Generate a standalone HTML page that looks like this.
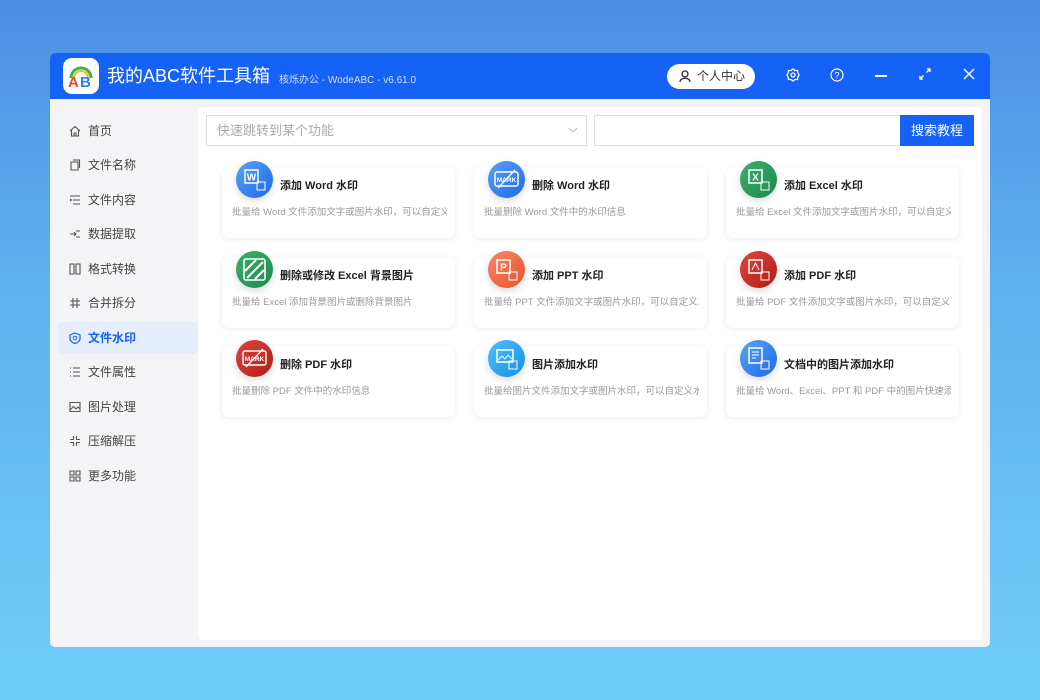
<!DOCTYPE html>
<html><head><meta charset="utf-8"><style>
*{margin:0;padding:0;box-sizing:border-box}
body{width:1040px;height:700px;overflow:hidden;background:linear-gradient(180deg,#4b8fe2 0%,#5fb0ef 40%,#70cdfa 100%);font-family:"Liberation Sans","Noto Sans CJK SC",sans-serif;position:relative}
.win{position:absolute;left:50px;top:53px;width:940px;height:594px;background:#f4f4f6;border-radius:5px;overflow:hidden}
.tb{position:absolute;left:0;top:0;width:940px;height:46px;background:#1661f6}
.logo{position:absolute;left:13px;top:5px;width:36px;height:36px;background:#fff;border-radius:9px}
.title{position:absolute;left:57px;top:10px;color:#fff;font-size:18px;line-height:26px}
.sub{position:absolute;left:229px;top:18px;color:#cfe0ff;font-size:10px}
.user{position:absolute;left:617px;top:11px;width:88px;height:25px;background:#fff;border-radius:13px;font-size:12px;color:#333;line-height:25px;padding-left:30px}
.ic{position:absolute;top:15px}
.side{position:absolute;left:0;top:46px;width:148px}
.si{position:absolute;left:8px;width:140px;height:32px;font-size:12px;color:#444;line-height:32px;padding-left:30px}
.si svg{position:absolute;left:11px;top:10px}
.si.act{background:#e6eefc;color:#1661f6;font-weight:bold;border-radius:4px}
.panel{position:absolute;left:148px;top:54px;width:784px;height:533px;background:#fff;border-radius:4px}
.inp{position:absolute;top:8px;height:31px;border:1px solid #dcdfe6;background:#fff;font-size:13px;color:#aaa;line-height:29px;padding-left:10px}
.btn{position:absolute;left:702px;top:8px;width:74px;height:31px;background:#1661f6;color:#fff;font-size:13px;line-height:31px;text-align:center}
.card{position:absolute;width:233px;height:71px;background:#fff;border-radius:7px;box-shadow:0 1px 6px rgba(0,0,0,.08)}
.card .c{position:absolute;left:14px;top:-6px;width:37px;height:37px;border-radius:50%;box-shadow:0 3px 8px rgba(0,0,0,.15)}
.card .c svg{position:absolute;left:0;top:0}
.card b{position:absolute;left:58px;top:10px;font-size:11px;color:#222}
.card p{position:absolute;left:10px;top:37px;width:215px;white-space:nowrap;overflow:hidden;font-size:9.5px;color:#999}
</style></head><body>
<div class="win">
<div class="tb">
<div class="logo"><svg width="36" height="36" viewBox="0 0 36 36"><path d="M8 20 A10 10 0 0 1 28 20" stroke="#3bb44a" stroke-width="3" fill="none"/><path d="M11 20 A7 7 0 0 1 25 20" stroke="#f5b915" stroke-width="2" fill="none"/><text x="5" y="29" font-size="15" font-weight="bold" fill="#e8443a" font-family="Liberation Sans">A</text><text x="17" y="29" font-size="15" font-weight="bold" fill="#2f7df0" font-family="Liberation Sans">B</text></svg></div>
<div class="title">我的ABC软件工具箱</div>
<div class="sub">核烁办公 - WodeABC - v6.61.0</div>
<div class="user"><svg style="position:absolute;left:12px;top:6px" width="12" height="13" viewBox="0 0 12 13"><circle cx="6" cy="4" r="3" fill="none" stroke="#333" stroke-width="1.3"/><path d="M1 12 C1 7 11 7 11 12" fill="none" stroke="#333" stroke-width="1.3"/></svg>个人中心</div>
<svg class="ic" style="left:736px" width="14" height="14" viewBox="0 0 14 14"><circle cx="7" cy="7" r="2" fill="none" stroke="#fff" stroke-width="1.3"/><path d="M7 1 L9 2.5 L11.5 2.5 L12 5 L13 7 L12 9 L11.5 11.5 L9 11.5 L7 13 L5 11.5 L2.5 11.5 L2 9 L1 7 L2 5 L2.5 2.5 L5 2.5Z" fill="none" stroke="#fff" stroke-width="1.3"/></svg>
<svg class="ic" style="left:780px" width="14" height="14" viewBox="0 0 14 14"><circle cx="7" cy="7" r="6" fill="none" stroke="#fff" stroke-width="1.2"/><text x="7" y="10.5" font-size="9" fill="#fff" text-anchor="middle" font-family="Liberation Sans">?</text></svg>
<div style="position:absolute;left:825px;top:22px;width:12px;height:1.5px;background:#fff"></div>
<svg class="ic" style="left:869px" width="12" height="12" viewBox="0 0 12 12"><path d="M1 11 L4.5 7.5 M7.5 4.5 L11 1 M1 8 L1 11 L4 11 M8 1 L11 1 L11 4" stroke="#fff" stroke-width="1.3" fill="none"/></svg>
<svg class="ic" style="left:913px" width="12" height="12" viewBox="0 0 12 12"><path d="M1 1 L11 11 M11 1 L1 11" stroke="#fff" stroke-width="1.4"/></svg>
</div>
<div class="side">
<div class="si" style="top:16px"><svg width="12" height="12" viewBox="0 0 12 12"><path d="M1 6 L6 1.5 L11 6 M2.5 5 V11 H9.5 V5 M5 11 V8 H7 V11" fill="none" stroke="#555" stroke-width="1.1"/></svg>首页</div>
<div class="si" style="top:50px"><svg width="12" height="12" viewBox="0 0 12 12"><path d="M2 3 V11 H9 V3 Z M4 1 H10.5 V9" fill="none" stroke="#555" stroke-width="1.1"/></svg>文件名称</div>
<div class="si" style="top:85px"><svg width="12" height="12" viewBox="0 0 12 12"><path d="M1 2 H11 M4 6 H11 M4 10 H11 M1 5 L2.5 6 L1 7" fill="none" stroke="#555" stroke-width="1.1"/></svg>文件内容</div>
<div class="si" style="top:119px"><svg width="12" height="12" viewBox="0 0 12 12"><path d="M1 6 H7 M5 4 L7 6 L5 8 M7 3 H11 M7 9 H11" fill="none" stroke="#555" stroke-width="1.1"/></svg>数据提取</div>
<div class="si" style="top:154px"><svg width="12" height="12" viewBox="0 0 12 12"><path d="M1 1 H5 V11 H1Z M7 1 H11 V11 H7Z" fill="none" stroke="#555" stroke-width="1.1"/></svg>格式转换</div>
<div class="si" style="top:188px"><svg width="12" height="12" viewBox="0 0 12 12"><path d="M4 1 V11 M8 1 V11 M1 4 H11 M1 8 H11" fill="none" stroke="#555" stroke-width="1.1"/></svg>合并拆分</div>
<div class="si act" style="top:223px"><svg width="12" height="12" viewBox="0 0 12 12"><path d="M6 1 L11 3 V7 C11 9 8 11 6 11.5 C4 11 1 9 1 7 V3Z" fill="none" stroke="#1661f6" stroke-width="1.2"/><circle cx="6" cy="6" r="1.8" fill="none" stroke="#1661f6"/></svg>文件水印</div>
<div class="si" style="top:257px"><svg width="12" height="12" viewBox="0 0 12 12"><path d="M1 2 H2 M4 2 H11 M1 6 H2 M4 6 H11 M1 10 H2 M4 10 H11" fill="none" stroke="#555" stroke-width="1.1"/></svg>文件属性</div>
<div class="si" style="top:292px"><svg width="12" height="12" viewBox="0 0 12 12"><path d="M1 1.5 H11 V10.5 H1Z M1 9 L4.5 5.5 L7 8 L9 6 L11 8" fill="none" stroke="#555" stroke-width="1.1"/></svg>图片处理</div>
<div class="si" style="top:326px"><svg width="12" height="12" viewBox="0 0 12 12"><path d="M4.5 1 V4.5 H1 M7.5 1 V4.5 H11 M4.5 11 V7.5 H1 M7.5 11 V7.5 H11" fill="none" stroke="#555" stroke-width="1.1"/></svg>压缩解压</div>
<div class="si" style="top:361px"><svg width="12" height="12" viewBox="0 0 12 12"><path d="M1 1 H5 V5 H1Z M7 1 H11 V5 H7Z M1 7 H5 V11 H1Z M7 7 H11 V11 H7Z" fill="none" stroke="#555" stroke-width="1.1"/></svg>更多功能</div>
</div>
<div class="panel">
<div class="inp" style="left:8px;width:381px">快速跳转到某个功能<svg style="position:absolute;right:8px;top:11px" width="10" height="6" viewBox="0 0 10 6"><path d="M1 1 L5 5 L9 1" fill="none" stroke="#bbb"/></svg></div>
<div class="inp" style="left:396px;width:307px"></div>
<div class="btn">搜索教程</div>

<div class="card" style="left:24px;top:60px"><div class="c" style="background:linear-gradient(135deg,#5aa2f5,#1c6ae8)"><svg width="37" height="37"><rect x="9" y="9" width="13" height="13" fill="none" stroke="#fff" stroke-width="1.5"/><text x="15.5" y="19.5" fill="#fff" font-size="10" font-weight="bold" text-anchor="middle" font-family="Liberation Sans">W</text><rect x="21" y="21" width="8" height="8" fill="none" stroke="#fff"/></svg></div><b>添加 Word 水印</b><p>批量给 Word 文件添加文字或图片水印，可以自定义</p></div>
<div class="card" style="left:276px;top:60px"><div class="c" style="background:linear-gradient(135deg,#5aa2f5,#1c6ae8)"><svg width="37" height="37"><rect x="7" y="11" width="23" height="14" rx="2" fill="none" stroke="#fff" stroke-width="1.5"/><text x="18.5" y="21" fill="#fff" font-size="6.5" font-weight="bold" text-anchor="middle" font-family="Liberation Sans">MARK</text><path d="M10 27 L27 9" stroke="#fff" stroke-width="1.3"/></svg></div><b>删除 Word 水印</b><p>批量删除 Word 文件中的水印信息</p></div>
<div class="card" style="left:528px;top:60px"><div class="c" style="background:linear-gradient(135deg,#3cae6e,#1f8a4e)"><svg width="37" height="37"><rect x="9" y="9" width="13" height="13" fill="none" stroke="#fff" stroke-width="1.5"/><text x="15.5" y="19.5" fill="#fff" font-size="10" font-weight="bold" text-anchor="middle" font-family="Liberation Sans">X</text><rect x="21" y="21" width="8" height="8" fill="none" stroke="#fff"/></svg></div><b>添加 Excel 水印</b><p>批量给 Excel 文件添加文字或图片水印，可以自定义</p></div>

<div class="card" style="left:24px;top:150px"><div class="c" style="background:linear-gradient(135deg,#3cae6e,#1f8a4e)"><svg width="37" height="37"><rect x="8" y="8" width="21" height="21" rx="2" fill="none" stroke="#fff" stroke-width="1.6"/><path d="M9 20 L20 9 M11 27 L27 11 M19 28 L28 19" stroke="#fff" stroke-width="2"/></svg></div><b>删除或修改 Excel 背景图片</b><p>批量给 Excel 添加背景图片或删除背景图片</p></div>
<div class="card" style="left:276px;top:150px"><div class="c" style="background:linear-gradient(135deg,#f7886a,#e4542e)"><svg width="37" height="37"><rect x="9" y="9" width="13" height="13" fill="none" stroke="#fff" stroke-width="1.5"/><text x="15.5" y="19.5" fill="#fff" font-size="10" font-weight="bold" text-anchor="middle" font-family="Liberation Sans">P</text><rect x="21" y="21" width="8" height="8" fill="none" stroke="#fff"/></svg></div><b>添加 PPT 水印</b><p>批量给 PPT 文件添加文字或图片水印，可以自定义水</p></div>
<div class="card" style="left:528px;top:150px"><div class="c" style="background:linear-gradient(135deg,#e0453e,#b01c18)"><svg width="37" height="37"><rect x="9" y="9" width="13" height="13" fill="none" stroke="#fff" stroke-width="1.5"/><path d="M12 19 L15.5 12 L19 19" fill="none" stroke="#fff"/><rect x="21" y="21" width="8" height="8" fill="none" stroke="#fff"/></svg></div><b>添加 PDF 水印</b><p>批量给 PDF 文件添加文字或图片水印，可以自定义</p></div>

<div class="card" style="left:24px;top:239px"><div class="c" style="background:linear-gradient(135deg,#e0453e,#b01c18)"><svg width="37" height="37"><rect x="7" y="11" width="23" height="14" rx="2" fill="none" stroke="#fff" stroke-width="1.5"/><text x="18.5" y="21" fill="#fff" font-size="6.5" font-weight="bold" text-anchor="middle" font-family="Liberation Sans">MARK</text><path d="M10 27 L27 9" stroke="#fff" stroke-width="1.3"/></svg></div><b>删除 PDF 水印</b><p>批量删除 PDF 文件中的水印信息</p></div>
<div class="card" style="left:276px;top:239px"><div class="c" style="background:linear-gradient(135deg,#4cc0f7,#1a8fe6)"><svg width="37" height="37"><rect x="9" y="10" width="16" height="12" fill="none" stroke="#fff" stroke-width="1.5"/><path d="M10 20 L14 16 L17 19 L20 15 L24 19" fill="none" stroke="#fff"/><rect x="21" y="21" width="8" height="8" fill="none" stroke="#fff"/></svg></div><b>图片添加水印</b><p>批量给图片文件添加文字或图片水印，可以自定义水</p></div>
<div class="card" style="left:528px;top:239px"><div class="c" style="background:linear-gradient(135deg,#5aa2f5,#1c6ae8)"><svg width="37" height="37"><rect x="9" y="8" width="13" height="15" fill="none" stroke="#fff" stroke-width="1.5"/><path d="M12 12 H19 M12 15 H19 M12 18 H16" stroke="#fff"/><rect x="21" y="21" width="8" height="8" fill="none" stroke="#fff"/></svg></div><b>文档中的图片添加水印</b><p>批量给 Word、Excel、PPT 和 PDF 中的图片快速添加</p></div>
</div>
</div>
</body></html>
